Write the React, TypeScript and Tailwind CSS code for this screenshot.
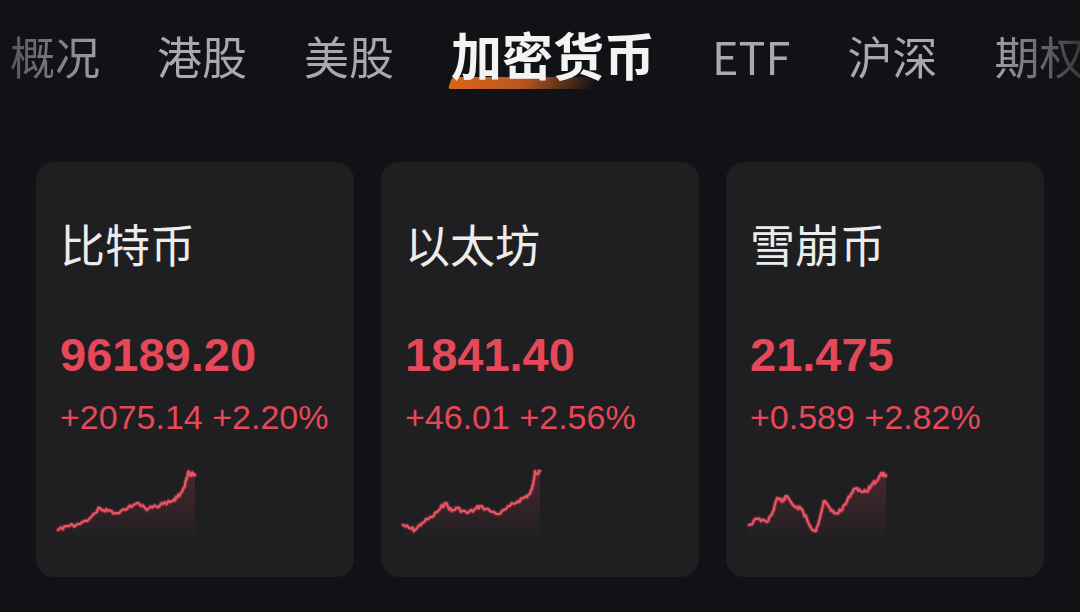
import React from "react";

const tabs = ["概况", "港股", "美股", "加密货币", "ETF", "沪深", "期权"];
const activeTab = "加密货币";

type Coin = {
  name: string;
  price: string;
  change: string;
  percent: string;
  origin: number;
  points: [number, number][];
  seed: number;
};

const coins: Coin[] = [
  {
    name: "比特币",
    price: "96189.20",
    change: "+2075.14",
    percent: "+2.20%",
    origin: 54,
    seed: 3,
    points: [
      [58, 529], [66, 525], [80, 523], [92, 515], [100, 507], [108, 510],
      [117, 512], [128, 507], [137, 502], [147, 509], [156, 505], [163, 503],
      [172, 500], [177, 497], [183, 488], [186, 480], [188, 471], [191, 475],
      [193, 472], [195, 474],
    ],
  },
  {
    name: "以太坊",
    price: "1841.40",
    change: "+46.01",
    percent: "+2.56%",
    origin: 399,
    seed: 7,
    points: [
      [403, 524], [409, 527], [415, 529], [422, 522], [432, 516], [440, 508],
      [445, 502], [452, 510], [457, 507], [467, 512], [474, 509], [480, 505],
      [490, 510], [500, 513], [510, 505], [518, 500], [525, 496], [530, 493],
      [533, 484], [535, 470], [538, 473], [540, 470],
    ],
  },
  {
    name: "雪崩币",
    price: "21.475",
    change: "+0.589",
    percent: "+2.82%",
    origin: 745,
    seed: 11,
    points: [
      [750, 524], [758, 518], [768, 521], [774, 510], [778, 497], [784, 500],
      [788, 495], [795, 505], [802, 508], [808, 518], [812, 527], [817, 530],
      [822, 512], [825, 500], [830, 506], [835, 512], [842, 510], [848, 500],
      [852, 493], [858, 487], [864, 491], [868, 490], [873, 483], [878, 480],
      [882, 472], [885, 474], [887, 475],
    ],
  },
];

// small wiggle between the hand-picked points so the line looks like tick data
function buildLine(coin: Coin) {
  let s = coin.seed;
  const rand = () => {
    s = (s * 9301 + 49297) % 233280;
    return s / 233280;
  };
  const out: [number, number][] = [];
  for (let i = 0; i < coin.points.length - 1; i++) {
    const [x1, y1] = coin.points[i];
    const [x2, y2] = coin.points[i + 1];
    const steps = 5;
    for (let k = 0; k < steps; k++) {
      const t = k / steps;
      const jitter = k === 0 ? 0 : (rand() - 0.5) * 4;
      out.push([x1 + (x2 - x1) * t - coin.origin, y1 + (y2 - y1) * t + jitter - 460]);
    }
  }
  const last = coin.points[coin.points.length - 1];
  out.push([last[0] - coin.origin, last[1] - 460]);
  return out;
}

function Sparkline({ coin, index }: { coin: Coin; index: number }) {
  const pts = buildLine(coin);
  const line = pts.map(([x, y], i) => `${i === 0 ? "M" : "L"}${x.toFixed(1)} ${y.toFixed(1)}`).join(" ");
  const first = pts[0];
  const last = pts[pts.length - 1];
  const area = `${line} L${last[0].toFixed(1)} 80 L${first[0].toFixed(1)} 80 Z`;
  const gradId = `fill-${index}`;
  return (
    <svg width="180" height="80" viewBox="0 0 180 80" className="-ml-[6px] mt-[27px] block">
      <defs>
        <linearGradient id={gradId} x1="0" y1="0" x2="0" y2="1">
          <stop offset="0%" stopColor="#e54858" stopOpacity="0.2" />
          <stop offset="100%" stopColor="#e54858" stopOpacity="0" />
        </linearGradient>
      </defs>
      <path d={area} fill={`url(#${gradId})`} />
      <path d={line} fill="none" stroke="#e54858" strokeOpacity="0.35" strokeWidth="4.5" strokeLinejoin="round" strokeLinecap="round" />
      <path d={line} fill="none" stroke="#ea5464" strokeWidth="2.2" strokeLinejoin="round" strokeLinecap="round" />
    </svg>
  );
}

export default function App() {
  return (
    <main
      className="h-[612px] w-[1080px] overflow-hidden bg-[#111215]"
      style={{ fontFamily: '"Liberation Sans", "Noto Sans CJK SC", sans-serif' }}
    >
      <nav
        className="flex h-[110px] items-center gap-[57px] overflow-hidden whitespace-nowrap pl-[10px] [mask-image:linear-gradient(to_right,rgba(0,0,0,0.4)_0px,#000_110px,#000_990px,rgba(0,0,0,0.25)_1080px)]"
        style={{ fontFamily: '"Noto Sans CJK SC", "Liberation Sans", sans-serif' }}
      >
        {tabs.map((tab) =>
          tab === activeTab ? (
            <div key={tab} className="relative shrink-0">
              <span className="absolute left-[-1px] top-[48px] h-[12px] w-[146px] -skew-x-[20deg] rounded-[3px] bg-gradient-to-r from-[#d9651c] via-[#b9561d] to-transparent" />
              <span className="relative text-[51px] font-bold leading-none text-[#f3f3f3]">{tab}</span>
            </div>
          ) : (
            <span key={tab} className="shrink-0 text-[45px] leading-none text-[#a9a9ab]">
              {tab}
            </span>
          )
        )}
      </nav>

      <section className="mt-[52px] flex gap-[27px] pl-[36px]">
        {coins.map((coin, i) => (
          <div key={coin.name} className="h-[415px] w-[318px] rounded-[18px] bg-[#1f1f22] pl-[24px] pt-[59px]">
            <h2
              className="text-[45px] font-normal leading-none text-[#ececec]"
              style={{ fontFamily: '"Noto Sans CJK SC", sans-serif' }}
            >
              {coin.name}
            </h2>
            <p className="mt-[65px] text-[47px] font-bold leading-none text-[#e54858]">{coin.price}</p>
            <p className="mt-[22px] text-[34px] leading-none text-[#e54858]">
              {coin.change} {coin.percent}
            </p>
            <Sparkline coin={coin} index={i} />
          </div>
        ))}
      </section>
    </main>
  );
}
